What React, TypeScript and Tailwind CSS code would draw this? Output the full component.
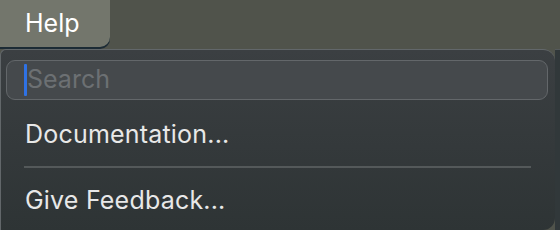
import React from "react";

export default function App() {
  const font = { fontFamily: "Inter, 'Liberation Sans', sans-serif" };
  return (
    <div
      className="relative w-[560px] h-[230px] overflow-hidden bg-[#50534b] flex flex-col"
      style={font}
    >
      <div className="h-[49px] flex items-start">
        <div className="w-[110px] h-[47px] bg-[#73766c] rounded-br-[10px] flex items-center pl-[25px] text-[25px] text-white shadow-[0_2px_0_#1c2b35]">
          Help
        </div>
      </div>
      <div className="flex flex-1">
        <div className="w-[555px] flex flex-col rounded-tr-[12px] rounded-tl-[6px] rounded-br-[12px] border-t border-l border-[#62676a] bg-gradient-to-b from-[#3b3f42] to-[#2e3435] pt-[10px] pl-[5px] pr-[6px]">
          <div className="h-[40px] w-[542px] rounded-[9px] border border-[#63676a] bg-[#45494c] flex items-center pl-[17px]">
            <div className="w-[3px] h-[32px] bg-[#2f72e4] rounded-[1px]" />
            <span className="text-[25px] text-[#6c7073]">Search</span>
          </div>
          <div className="h-[46px] mt-[12px] flex items-center pl-[19px] text-[25px] text-[#e8e8e8] tracking-[0.2px]">
            Documentation...
          </div>
          <div className="h-[2px] ml-[18px] mr-[18px] mt-[8px] bg-[#54595a]" />
          <div className="h-[46px] mt-[10px] flex items-center pl-[19px] text-[25px] text-[#e8e8e8] tracking-[0.2px]">
            Give Feedback...
          </div>
        </div>
        <div className="flex-1 bg-[#31383a] border-t border-[#555a5c]" />
      </div>
    </div>
  );
}
